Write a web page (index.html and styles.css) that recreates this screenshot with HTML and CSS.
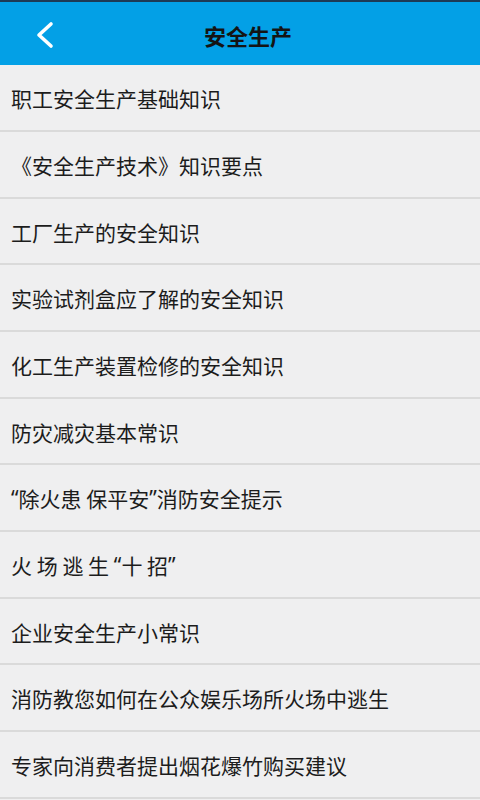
FILE: index.html
```html
<!DOCTYPE html>
<html>
<head lang="zh">
    <meta charset="UTF-8">
    <title>安全生产</title>
    <link rel="stylesheet" href="styles.css">
</head>
<body>
<div id="header">
    <span class="back">
        <svg width="22" height="28" viewBox="0 0 22 28">
            <polyline points="17,3 5,14 17,25" fill="none" stroke="#ffffff" stroke-width="3.6" stroke-linecap="round" stroke-linejoin="round"/>
        </svg>
    </span>
    <h1 class="title">安全生产</h1>
    <span class="spacer"></span>
</div>
<ul id="list">
    <li>职工安全生产基础知识</li>
    <li>《安全生产技术》知识要点</li>
    <li>工厂生产的安全知识</li>
    <li>实验试剂盒应了解的安全知识</li>
    <li>化工生产装置检修的安全知识</li>
    <li>防灾减灾基本常识</li>
    <li><span class="q">“</span>除火患 保平安<span class="q">”</span>消防安全提示</li>
    <li>火 场 逃 生 <span class="q">“</span>十 招<span class="q">”</span></li>
    <li>企业安全生产小常识</li>
    <li>消防教您如何在公众娱乐场所火场中逃生</li>
    <li>专家向消费者提出烟花爆竹购买建议</li>
</ul>
</body>
</html>
```

FILE: styles.css
```css
*{
    margin: 0;
    padding: 0;
    box-sizing: border-box;
}
ul,ol{
    list-style: none;
}
html,body{
    background: #efeff0;
    font-family: "Noto Sans CJK SC", "Noto Sans", sans-serif;
    color: #1c1c1c;
    overflow: hidden;
}
#header{
    height: 65.3px;
    background: #03a0e6;
    border-top: 2px solid #1d3a55;
    display: flex;
    align-items: center;
}
#header .back{
    width: 72px;
    display: flex;
    justify-content: flex-start;
    padding-left: 34px;
    padding-top: 2px;
}
#header .back svg{
    display: block;
}
#header .title{
    flex: 1;
    text-align: center;
    font-size: 22px;
    font-weight: bold;
    color: #141414;
    padding-top: 2px;
}
#header .spacer{
    width: 56px;
}
#list li{
    height: 66.7px;
    border-bottom: 2px solid #dadada;
    display: flex;
    align-items: center;
    padding-left: 11px;
    padding-top: 1px;
    font-size: 21px;
    white-space: pre;
}
#list .q{
    font-family: "Noto Sans", sans-serif;
}
```
